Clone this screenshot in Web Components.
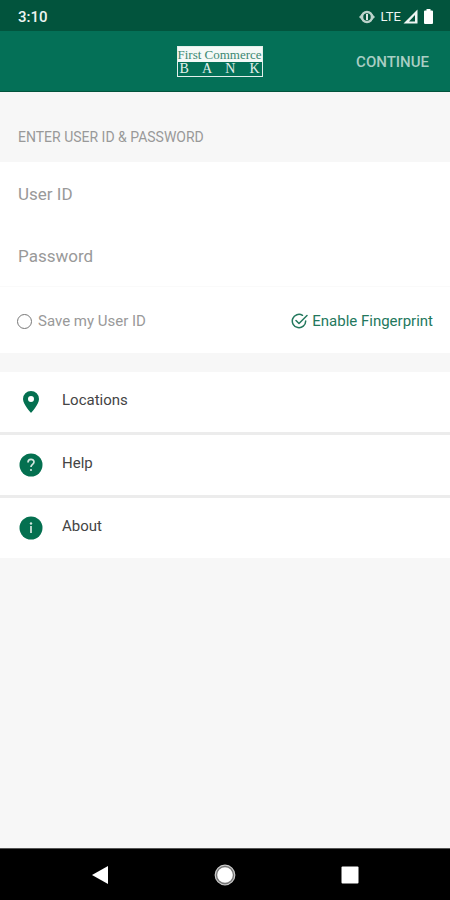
<!DOCTYPE html>
<html lang="en">
<head>
<meta charset="utf-8">
<meta name="viewport" content="width=device-width, initial-scale=1">
<title>First Commerce Bank</title>
<style>
html, body { margin: 0; height: 100%; }
body { font-family: Roboto, "Liberation Sans", sans-serif; background: #f7f7f7; }
</style>
</head>
<body>
<bank-login></bank-login>
<script>
const define = (name, html, setup) => {
  const template = document.createElement('template');
  template.innerHTML = '<style>*{box-sizing:border-box}svg{display:block;flex:none}</style>' + html;
  customElements.define(name, class extends HTMLElement {
    constructor() {
      super();
      this.attachShadow({ mode: 'open' }).append(template.content.cloneNode(true));
    }
    connectedCallback() { if (setup) setup(this, this.shadowRoot); }
  });
};

define('status-bar', `
<style>
:host { display: flex; align-items: center; justify-content: space-between; height: 29px; padding: 2px 17px 0 18px; background: #02543d; color: #eef5f2; font-size: 15px; font-weight: 500; }
.icons { display: flex; align-items: center; }
.lte { font-size: 13px; font-weight: 400; margin: 0 2px 0 6px; }
.signal { margin-right: 6px; }
</style>
<span>3:10</span>
<div class="icons">
  <svg width="16" height="14" viewBox="0 0 16 14" aria-hidden="true"><path d="M0 7l4-4v8zM16 7l-4-4v8z" fill="#bcd3cb"/><circle cx="8" cy="7" r="5" fill="none" stroke="#bcd3cb" stroke-width="2.500"/><path d="M8 4v6" stroke="#dbe8e3" stroke-width="2"/></svg>
  <span class="lte">LTE</span>
  <svg class="signal" width="15" height="15" viewBox="0 0 15 15" aria-hidden="true"><path d="M14.500 .5v14H.5z" fill="#eef5f2"/><path d="M12 6v6.500H6z" fill="#02543d"/></svg>
  <svg width="9" height="15" viewBox="0 0 9 15" aria-hidden="true"><path d="M2.500 0h4v1.500H8q1 0 1 1V14q0 1-1 1H1q-1 0-1-1V2.500q0-1 1-1h1.500z" fill="#fff"/></svg>
</div>`);

define('bank-logo', `
<style>
:host { display: block; width: 86px; border: 1px solid #e3efeb; font-family: "Liberation Serif", serif; text-align: center; white-space: nowrap; }
.name { height: 15px; line-height: 15px; font-size: 13px; background: #f4f9f7; color: #3b8873; }
.bank { height: 14px; line-height: 14px; font-size: 14px; padding: 0 2px; color: #e3efeb; text-align-last: justify; }
</style>
<div class="name">First Commerce</div>
<div class="bank">B A N K</div>`);

define('app-header', `
<style>
:host { display: grid; grid-template-columns: 1fr auto 1fr; align-items: center; height: 61px; padding: 1px 21px 0 10px; background: #047057; border-bottom: 1px solid #02543d; }
bank-logo { grid-column: 2; }
button { justify-self: end; border: 0; padding: 0; background: none; color: #a9cec3; font: 500 15px/20px Roboto, sans-serif; }
</style>
<bank-logo></bank-logo>
<button type="button">CONTINUE</button>`);

define('text-field', `
<style>
:host { display: flex; align-items: center; height: 62px; padding: 1px 18px 0; }
input { width: 100%; border: 0; padding: 0; outline: 0; background: none; color: #444; font: 400 17px/24px Roboto, sans-serif; }
input::placeholder { color: #999; opacity: 1; }
</style>
<input>`, (host, root) => {
  const input = root.querySelector('input');
  input.type = host.getAttribute('type') || 'text';
  input.placeholder = host.getAttribute('label');
  input.setAttribute('aria-label', host.getAttribute('label'));
});

define('save-option', `
<style>
:host { display: block; color: #999; font-size: 15px; }
label { display: flex; align-items: center; gap: 6px; }
input { appearance: none; width: 15px; height: 15px; margin: 0; border: 1px solid #777; border-radius: 50%; }
input:checked { background: #888; }
</style>
<label><input type="checkbox"><slot></slot></label>`);

define('fingerprint-option', `
<style>
:host { display: block; }
button { display: flex; align-items: center; gap: 4px; border: 0; padding: 0; background: none; color: #23785d; font: 400 15px/20px Roboto, sans-serif; }
</style>
<button type="button">
  <svg width="17" height="17" viewBox="0 0 17 17" fill="none" stroke="#23785d" stroke-width="1.500" stroke-linecap="round" stroke-linejoin="round" aria-hidden="true"><path d="M11.500 2.300A6.700 6.700 0 1 0 14.700 8"/><path d="M5 7.500l3 3L16 2.500"/></svg>
  <slot></slot>
</button>`);

define('menu-row', `
<style>
:host { display: block; background: #fff; }
a { display: flex; align-items: center; gap: 19px; height: 60px; padding: 0 19px; color: #444; font-size: 15px; line-height: 20px; text-decoration: none; }
span { padding-bottom: 4px; }
</style>
<a href="#"><slot name="icon"></slot><span><slot></slot></span></a>`);

define('nav-bar', `
<style>
:host { display: flex; justify-content: space-around; align-items: center; height: 52px; padding: 0 37px; background: #000; border-top: 1px solid #555; }
button { display: grid; place-items: center; width: 48px; height: 48px; padding: 0; border: 0; background: none; }
</style>
<button type="button" aria-label="Back"><svg width="18" height="20" viewBox="0 0 18 20"><path d="M17 1v18L1 10z" fill="#fff"/></svg></button>
<button type="button" aria-label="Home"><svg width="22" height="22" viewBox="0 0 22 22"><circle cx="11" cy="11" r="9.800" fill="#777" stroke="#ccc" stroke-width="1.200"/><circle cx="11" cy="11" r="7.800" fill="#fff"/></svg></button>
<button type="button" aria-label="Recent apps"><svg width="18" height="18" viewBox="0 0 18 18"><rect x=".5" y=".5" width="17" height="17" rx="1" fill="#fff"/></svg></button>`);

define('bank-login', `
<style>
:host { display: flex; flex-direction: column; min-height: 100%; background: #f7f7f7; }
status-bar { height: 31px; }
main { flex: 1; }
h1 { margin: 0; height: 70px; padding: 35px 18px 0; color: #999; font-size: 14px; line-height: 20px; font-weight: 400; }
form { background: #fff; }
.options { display: flex; align-items: center; justify-content: space-between; height: 67px; padding: 2px 17px 0; border-top: 1px solid #fafafa; }
nav { display: flex; flex-direction: column; gap: 3px; margin-top: 19px; background: #ececec; }
</style>
<status-bar></status-bar>
<app-header></app-header>
<main>
  <h1>ENTER USER ID &amp; PASSWORD</h1>
  <form>
    <text-field label="User ID"></text-field>
    <text-field label="Password" type="password"></text-field>
    <div class="options">
      <save-option>Save my User ID</save-option>
      <fingerprint-option>Enable Fingerprint</fingerprint-option>
    </div>
  </form>
  <nav aria-label="More">
    <menu-row><svg slot="icon" width="24" height="24" viewBox="0 0 24 24" aria-hidden="true"><path d="M12 1a8 8 0 0 0-8 8c0 5.500 8 14 8 14s8-8.500 8-14a8 8 0 0 0-8-8zm0 5a3 3 0 1 1 0 6 3 3 0 0 1 0-6z" fill="#047050"/></svg>Locations</menu-row>
    <menu-row><svg slot="icon" width="24" height="24" viewBox="0 0 24 24" aria-hidden="true"><circle cx="12" cy="12" r="11.500" fill="#047050"/><path d="M9 9.500c0-4 6-4 6-.5 0 2.500-3 2.300-3 5" fill="none" stroke="#d3e6df" stroke-width="1.700"/><circle cx="12" cy="17" r="1.100" fill="#d3e6df"/></svg>Help</menu-row>
    <menu-row><svg slot="icon" width="24" height="24" viewBox="0 0 24 24" aria-hidden="true"><circle cx="12" cy="12" r="11.500" fill="#047050"/><path d="M12 10v7" stroke="#b8d6cb" stroke-width="2"/><circle cx="12" cy="7.500" r="1.200" fill="#d3e6df"/></svg>About</menu-row>
  </nav>
</main>
<nav-bar></nav-bar>`);
</script>
</body>
</html>
